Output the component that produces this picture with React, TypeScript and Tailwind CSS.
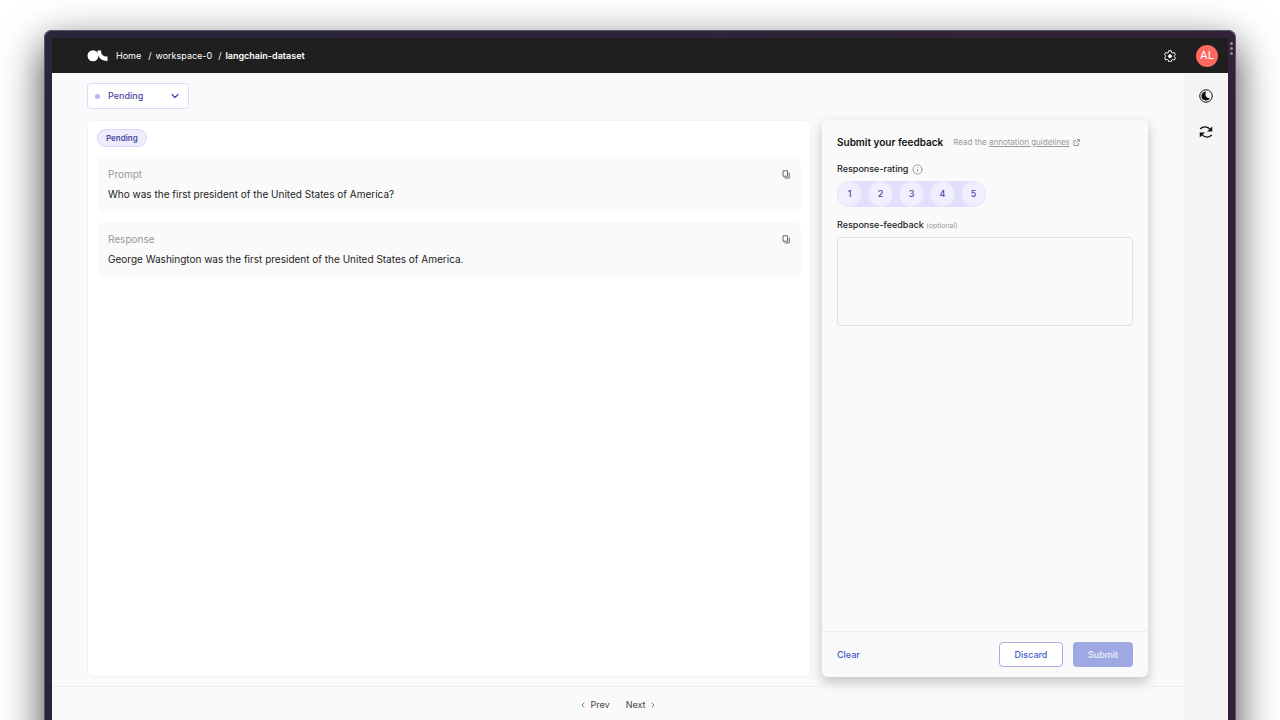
import { useState } from "react";
import { ChevronDown, ChevronLeft, ChevronRight, Info } from "lucide-react";

const records = [
  { title: "Prompt", text: "Who was the first president of the United States of America?" },
  { title: "Response", text: "George Washington was the first president of the United States of America." },
];

function Logo() {
  return (
    <svg viewBox="0 0 42 24" className="h-3 w-[21px]" fill="white" aria-hidden="true">
      <circle cx="12" cy="11.500" r="11" />
      <path d="M21 1h7c0 8 4 12 13 12v9C28 22 21 14 21 1z" />
    </svg>
  );
}

function GearIcon() {
  return (
    <svg viewBox="0 0 24 24" className="size-3" fill="none" stroke="white" strokeWidth="2" strokeLinejoin="round" aria-hidden="true">
      <path d="M9.500 1.500h5l.7 3.300 2 1.200 3.300-1 2.500 4.300-2.500 2.300v1.800l2.500 2.300-2.500 4.300-3.300-1-2 1.200-.7 3.300h-5l-.7-3.300-2-1.200-3.300 1L1 15.700l2.500-2.300v-1.800L1 9.300 3.500 5l3.300 1 2-1.200z" />
      <circle cx="12" cy="12.500" r="3" fill="white" />
    </svg>
  );
}

function MoonIcon() {
  return (
    <svg viewBox="0 0 28 28" className="size-[14px]" aria-hidden="true">
      <circle cx="14" cy="14" r="12.500" fill="none" stroke="#111" strokeWidth="2" />
      <path d="M14 5a9 9 0 1 0 8 13c-5 1-9-2-9-7 0-2.500.5-4.500 1-6z" fill="#111" />
    </svg>
  );
}

function RefreshIcon() {
  return (
    <svg viewBox="0 0 28 28" className="size-[14px]" fill="none" stroke="#111" strokeWidth="3" aria-hidden="true">
      <path d="M2.500 8c5-5 13-5 19-.5M25.500 20c-5 5-13 5-19 .5" />
      <path d="M26.500 3v10H16zM1.500 25V15H12z" fill="#111" stroke="none" />
    </svg>
  );
}

function CopyIcon() {
  return (
    <svg viewBox="0 0 16 18" className="h-[9px] w-2" fill="none" stroke="#666" strokeWidth="2" aria-hidden="true">
      <path d="M2 1.500h9v11H2z" />
      <path d="M5 16h9.500V5" />
    </svg>
  );
}

function ExternalIcon() {
  return (
    <svg viewBox="0 0 14 14" className="size-[7px]" fill="none" stroke="#999" strokeWidth="2" aria-hidden="true">
      <path d="M6 3H2v10h9V8M8 1h5v5M13 1 6 8" />
    </svg>
  );
}

function Header() {
  return (
    <header className="flex h-[35px] shrink-0 items-center bg-[#1f1f1f] pr-[10px] pl-[35px] text-white">
      <Logo />
      <nav aria-label="Breadcrumb" className="ml-2 flex gap-1 text-[9px]">
        <a href="#home" className="mr-[3px]">Home</a>
        <span>/</span>
        <a href="#workspace" className="mr-[2px]">workspace-0</a>
        <span>/</span>
        <a href="#dataset" className="font-semibold">langchain-dataset</a>
      </nav>
      <button aria-label="Settings" className="ml-auto">
        <GearIcon />
      </button>
      <button className="ml-5 flex size-[22px] items-center justify-center rounded-full bg-[#ff675f] text-[11px]">AL</button>
    </header>
  );
}

function RecordCard() {
  return (
    <section className="flex min-w-0 flex-1 flex-col gap-[10px] rounded-md border border-[#f2f2f2] bg-white px-[9px] py-2">
      <span className="self-start rounded-full border border-[#d9d6f8] bg-[#eeecfd] px-2 text-[8px] leading-4 font-semibold text-[#4c48a0]">
        Pending
      </span>
      {records.map(({ title, text }) => (
        <article key={title} className="rounded-md bg-[#fafafa] px-[11px] pt-[9px] pb-[10px]">
          <div className="flex items-center justify-between">
            <h2 className="text-[10px] leading-4 text-[#999]">{title}</h2>
            <button aria-label={`Copy ${title}`}>
              <CopyIcon />
            </button>
          </div>
          <p className="mt-1 text-[10px] leading-4 text-[#222]">{text}</p>
        </article>
      ))}
    </section>
  );
}

function FeedbackForm() {
  const [rating, setRating] = useState<number | null>(null);
  const [feedback, setFeedback] = useState("");

  const clear = () => {
    setRating(null);
    setFeedback("");
  };

  return (
    <form
      onSubmit={(e) => e.preventDefault()}
      className="flex w-[326px] shrink-0 flex-col rounded-md bg-[#fafafa] shadow-[0_5px_12px_1px_rgba(0,0,0,0.2)]"
    >
      <div className="flex flex-1 flex-col px-[15px] pt-[14px]">
        <div className="flex items-center gap-[10px]">
          <h2 className="text-[10px] leading-4 font-semibold text-[#111]">Submit your feedback</h2>
          <p className="text-[8px] text-[#999]">
            Read the{" "}
            <a href="#guidelines" className="inline-flex items-center gap-[3px] underline">
              annotation guidelines <ExternalIcon />
            </a>
          </p>
        </div>
        <fieldset className="mt-[11px]">
          <legend className="flex items-center gap-1 text-[9px] leading-4 font-medium text-[#222]">
            Response-rating <Info className="size-[11px] text-[#777]" strokeWidth={1.5} />
          </legend>
          <div className="mt-1 flex w-fit gap-[6px] rounded-full bg-[#e2dffc]">
            {[1, 2, 3, 4, 5].map((n) => (
              <button
                key={n}
                type="button"
                aria-pressed={rating === n}
                onClick={() => setRating(n)}
                className="h-[26px] w-[25px] rounded-full border border-[#e9e6fd] bg-[#f0eeff] text-[9px] font-medium text-[#4c48a0] aria-pressed:bg-[#4c48a0] aria-pressed:text-white"
              >
                {n}
              </button>
            ))}
          </div>
        </fieldset>
        <label htmlFor="feedback" className="mt-[10px] text-[9px] leading-4 font-medium text-[#222]">
          Response-feedback <span className="text-[7px] font-normal text-[#999]">(optional)</span>
        </label>
        <textarea
          id="feedback"
          value={feedback}
          onChange={(e) => setFeedback(e.target.value)}
          className="mt-[3px] h-[89px] resize-none rounded-sm border border-[#e0e0e0] p-2 text-[10px] outline-none"
        />
      </div>
      <div className="flex items-center border-t border-[#eee] px-[15px] py-[10px] text-[9px] font-medium">
        <button type="button" onClick={clear} className="text-[#3e5cc9]">Clear</button>
        <button type="button" className="ml-auto h-[25px] w-16 rounded-sm border border-[#a5aedf] bg-white text-[#3e5cc9]">Discard</button>
        <button type="submit" className="ml-[10px] h-[25px] w-[60px] rounded-sm bg-[#9ea9e3] text-[#eef0ff]">Submit</button>
      </div>
    </form>
  );
}

export default function App() {
  return (
    <div className="h-screen overflow-hidden bg-white px-11 pt-[30px] font-['Inter',sans-serif]">
      {/* the window runs past the bottom edge of the screen */}
      <div className="relative flex h-[calc(100%+48px)] flex-col rounded-t-lg bg-linear-to-r from-[#29263b] to-[#332237] px-2 pt-2 shadow-[0_14px_40px_rgba(0,0,0,0.75)] inset-ring inset-ring-[#5a5860]">
        <div className="absolute top-3 right-[3px] flex flex-col gap-[2px]">
          <i className="size-[3px] rounded-full bg-[#94899a]" />
          <i className="size-[3px] rounded-full bg-[#94899a]" />
          <i className="size-[3px] rounded-full bg-[#94899a]" />
        </div>
        <Header />
        <div className="flex min-h-0 flex-1 bg-[#fafafa]">
          <div className="flex min-w-0 flex-1 flex-col">
            <main className="flex min-h-0 flex-1 flex-col pt-[10px] pr-9 pb-[9px] pl-[35px]">
              <div className="relative flex h-[26px] w-[102px] shrink-0 items-center rounded-sm border border-[#dcd9fa] bg-white text-[#4c48a0]">
                <span className="ml-[7px] size-[5px] rounded-full bg-[#b9b3f2]" />
                <select aria-label="Status" className="h-full flex-1 appearance-none pl-2 text-[9px] font-medium outline-none">
                  <option>Pending</option>
                  <option>Submitted</option>
                  <option>Discarded</option>
                </select>
                <ChevronDown className="pointer-events-none absolute right-[7px] size-3" strokeWidth={2.5} />
              </div>
              <div className="mt-[11px] flex min-h-0 flex-1 gap-[11px]">
                <RecordCard />
                <FeedbackForm />
              </div>
            </main>
            <footer className="flex h-[82px] shrink-0 items-start justify-center gap-4 border-t border-[#eee] pt-[10px] text-[9px] leading-4 text-[#444]">
              <button className="flex items-center gap-1">
                <ChevronLeft className="size-2" /> Prev
              </button>
              <button className="flex items-center gap-1">
                Next <ChevronRight className="size-2" />
              </button>
            </footer>
          </div>
          <aside className="flex w-11 shrink-0 flex-col items-center gap-[22px] bg-[#f5f5f5] pt-4">
            <button aria-label="Toggle theme">
              <MoonIcon />
            </button>
            <button aria-label="Refresh">
              <RefreshIcon />
            </button>
          </aside>
        </div>
      </div>
    </div>
  );
}
